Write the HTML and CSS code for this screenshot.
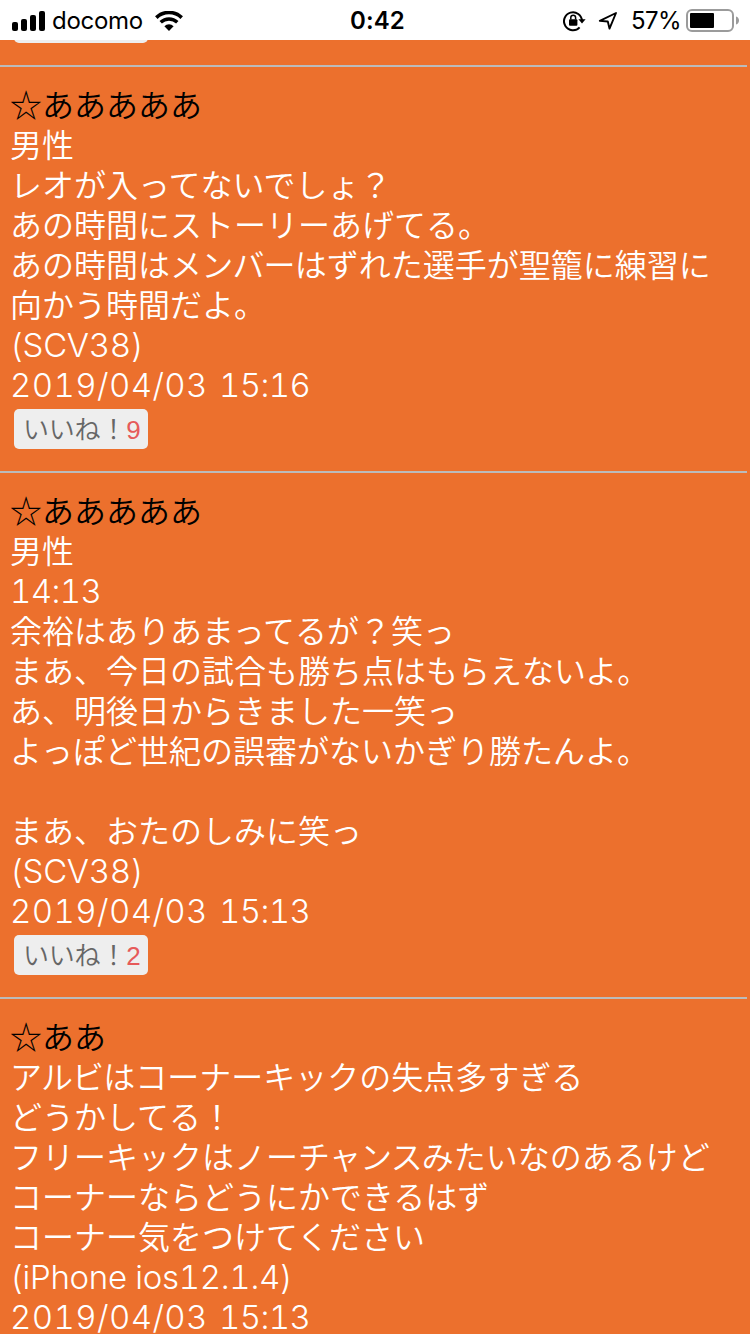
FILE: index.html
```
<!DOCTYPE html>
<html lang="ja">
<head>
    <meta charset="UTF-8">
    <meta name="viewport" content="width=device-width, initial-scale=1.0">
    <title>掲示板</title>
    <link rel="stylesheet" href="styles.css">
</head>
<body>

    <!-- Status bar -->
    <header class="status-bar">
        <div class="status-left">
            <svg class="signal" width="34" height="20" viewBox="0 0 34 20">
                <rect x="0" y="11" width="6" height="9" rx="2"/>
                <rect x="9" y="8" width="6" height="12" rx="2"/>
                <rect x="18" y="4" width="6" height="16" rx="2"/>
                <rect x="27" y="0" width="6" height="20" rx="2"/>
            </svg>
            <span class="carrier">docomo</span>
            <svg class="wifi" width="28" height="20" viewBox="0 0 28 20">
                <path d="M1.3 6.6a18.2 18.2 0 0 1 25.4 0" fill="none" stroke="#000" stroke-width="3.6"/>
                <path d="M5.7 11.3a12 12 0 0 1 16.6 0" fill="none" stroke="#000" stroke-width="3.4"/>
                <path d="M9.4 15.2a6.6 6.6 0 0 1 9.2 0L14 19.9z"/>
            </svg>
        </div>
        <div class="clock">0:42</div>
        <div class="status-right">
            <svg class="lock" width="24" height="22" viewBox="0 0 24 22">
                <path d="M16.6 17.4A9 9 0 1 1 19 11" fill="none" stroke="#000" stroke-width="2"/>
                <path d="M15.4 9.2h7.2L19 13.6z"/>
                <rect x="6" y="9.3" width="8.4" height="6.4" rx="1"/>
                <path d="M7.8 9.5V7.6a2.4 2.4 0 0 1 4.8 0v1.9" fill="none" stroke="#000" stroke-width="1.5"/>
            </svg>
            <svg class="location" width="20" height="20" viewBox="0 0 20 20">
                <path d="M1.8 9.9 18 2 11.5 17.6 9.8 10.5z" fill="none" stroke="#000" stroke-width="1.9" stroke-linejoin="round"/>
            </svg>
            <span class="percent">57%</span>
            <svg class="battery" width="54" height="24" viewBox="0 0 54 24">
                <rect x="1" y="1" width="46" height="21" rx="5" fill="#fff" stroke="#9b9b9b" stroke-width="2"/>
                <rect x="4" y="4" width="24" height="15" rx="1"/>
                <path d="M50 7.5c4 1 4 7 0 8z" fill="#9b9b9b"/>
            </svg>
        </div>
    </header>

    <!-- Posts -->
    <main class="viewport">
        <div class="thread">
            <article class="post post-previous">
                <button class="like"></button>
            </article>

            <article class="post">
                <h2 class="name">☆あああああ</h2>
                <p>男性</p>
                <p>レオが入ってないでしょ？</p>
                <p>あの時間にストーリーあげてる。</p>
                <p>あの時間は<span class="kana">メンバー</span>はずれた選手が聖籠に練習に</p>
                <p>向かう時間だよ。</p>
                <p class="device">(SCV38)</p>
                <p class="date">2019/04/03 <span class="time">15:16</span></p>
                <button class="like">いいね！<span class="count">9</span></button>
            </article>

            <article class="post">
                <h2 class="name">☆あああああ</h2>
                <p>男性</p>
                <p class="date"><span class="time">14:13</span></p>
                <p>余裕はありあまってるが？笑っ</p>
                <p>まあ、今日の試合も勝ち点はもらえないよ。</p>
                <p>あ、明後日からきました一笑っ</p>
                <p>よっぽど世紀の誤審がないかぎり勝たんよ。</p>
                <p><br></p>
                <p>まあ、おたのしみに笑っ</p>
                <p class="device">(SCV38)</p>
                <p class="date">2019/04/03 <span class="time">15:13</span></p>
                <button class="like">いいね！<span class="count">2</span></button>
            </article>

            <article class="post">
                <h2 class="name">☆ああ</h2>
                <p><span class="kana">アルビ</span>はコーナーキックの失点多すぎる</p>
                <p>どうかしてる！</p>
                <p>フリーキックはノー<span class="kana">チャンス</span>みたいなのあるけど</p>
                <p>コーナーならどうにかできるはず</p>
                <p>コーナー気をつけてください</p>
                <p class="device">(iPhone ios12.1.4)</p>
                <p class="date">2019/04/03 <span class="time">15:13</span></p>
            </article>
        </div>
    </main>

</body>
</html>
```
FILE: styles.css
```
* {
    box-sizing: border-box;
}
body {
    display: flex;
    flex-direction: column;
    height: 1334px;
    margin: 0;
    overflow: hidden;
    background-color: #ec702d;
    font-family: "Noto Sans CJK JP", sans-serif;
}

/* Status bar */
.status-bar {
    display: grid;
    grid-template-columns: 1fr auto 1fr;
    align-items: center;
    flex: none;
    height: 40px;
    padding: 1px 10px 0 12px;
    background: white;
    color: black;
    font-family: Inter, sans-serif;
    font-size: 24px;
    line-height: 39px;
}
.status-left, .status-right {
    display: flex;
    align-items: center;
}
.status-right {
    justify-content: flex-end;
}
.carrier {
    margin-left: 6px;
    letter-spacing: -0.3px;
}
.wifi {
    margin-left: 12px;
}
.clock {
    padding-left: 3px;
    font-weight: 600;
    letter-spacing: 0.1px;
}
.lock {
    margin-top: 1px;
}
.location {
    margin-left: 11px;
}
.percent {
    margin-left: 13px;
    letter-spacing: -0.6px;
}
.battery {
    margin-left: 5px;
}

/* Posts */
.viewport {
    flex: 1;
    min-height: 0;
    overflow: hidden;
}
.thread {
    width: 747px;
    margin-top: -37px;
}
.post {
    padding: 16px 0 22px 10px;
    border-bottom: 2px solid #bbb;
    color: white;
    font-size: 32px;
    font-weight: 350;
    line-height: 40px;
}
.post-previous {
    padding-top: 0;
}
.post p, .name {
    height: 40px;
    margin: 0;
    white-space: nowrap;
}
.name {
    color: black;
    font-size: 32px;
    font-weight: 350;
}
.kana {
    letter-spacing: -0.8px;
}
.post .device, .post .date {
    padding-top: 2px;
    font-family: Inter, sans-serif;
    font-size: 33px;
    font-weight: 350;
    font-feature-settings: "tnum";
    letter-spacing: 0.4px;
}
.post .device {
    letter-spacing: -0.3px;
}
.post .date {
    word-spacing: 2px;
}
.time {
    letter-spacing: -0.6px;
}
.like {
    display: block;
    width: 134px;
    height: 40px;
    margin: 6px 0 0 4px;
    padding: 0 0 2px 9px;
    border: none;
    border-radius: 5px;
    background-color: #eee;
    color: #666;
    font-family: "Noto Sans CJK JP", sans-serif;
    font-size: 26px;
    font-weight: 350;
    line-height: 38px;
    letter-spacing: -0.2px;
    text-align: left;
    white-space: nowrap;
}
.post-previous .like {
    margin-top: 0;
}
.count {
    color: #e65a5a;
    font-family: "Liberation Sans", sans-serif;
}
```
